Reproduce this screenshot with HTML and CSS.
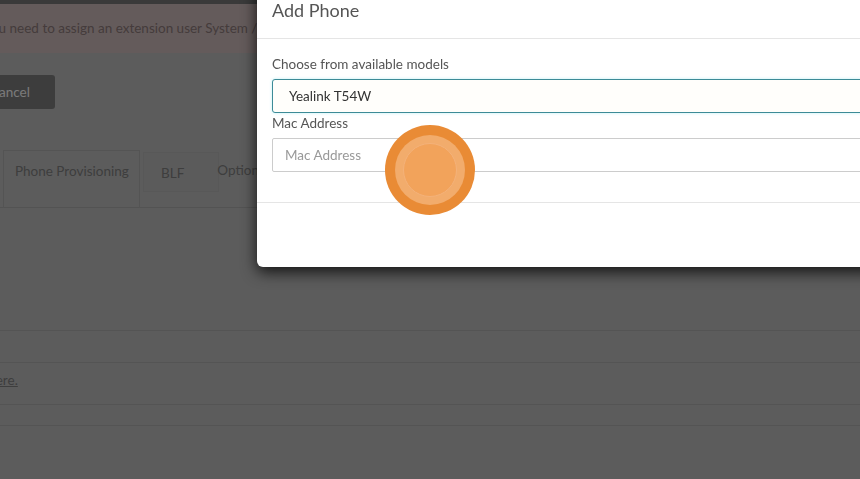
FILE: index.html
```html
<!DOCTYPE html>
<html lang="en">
<head>
<meta charset="utf-8">
<title>Add Phone</title>
<link rel="stylesheet" href="styles.css">
</head>
<body>
<div class="page">
  <div class="topbar"></div>
  <div class="alert">You need to assign an extension user System / Roles</div>
  <div class="actions">
    <button class="btn-cancel">Cancel</button>
  </div>
  <div class="tabs">
    <div class="tab active">Phone Provisioning</div>
    <div class="tab hover">BLF</div>
    <div class="tab">Options</div>
  </div>
  <div class="tab-body">
    <div class="row r1"></div>
    <div class="row r2"></div>
    <div class="row r3"><a href="#" class="link">Click here.</a></div>
    <div class="row r4"></div>
  </div>
</div>

<div class="backdrop"></div>

<div class="modal">
  <div class="modal-header">Add Phone</div>
  <div class="modal-body">
    <label class="lbl">Choose from available models</label>
    <div class="select">Yealink T54W</div>
    <label class="lbl">Mac Address</label>
    <input class="input" type="text" placeholder="Mac Address">
  </div>
  <div class="modal-footer"></div>
</div>

<div class="click-marker"><div class="ring"><div class="dot"></div></div></div>
</body>
</html>
```

FILE: styles.css
```css
html, body {
  margin: 0;
  padding: 0;
}
body {
  width: 860px;
  height: 479px;
  overflow: hidden;
  background: #b8b8b8;
  font-family: "Lato", "Liberation Sans", sans-serif;
  font-size: 13.5px;
  color: #333;
}
.page {
  display: flex;
  flex-direction: column;
}
.topbar {
  height: 4px;
  background: #747474;
}
.alert {
  height: 49px;
  box-sizing: border-box;
  padding: 14px 0 0 0;
  margin-left: -16px;
  background: #c8b6b6;
  color: #8a7878;
  line-height: 20px;
  white-space: nowrap;
}
.actions {
  padding-top: 22px;
  margin-left: -22px;
}
.btn-cancel {
  height: 34px;
  width: 77px;
  border: 0;
  border-radius: 3px;
  background: #7a7a7a;
  color: #f4f4f4;
  font-family: inherit;
  font-size: 13.5px;
  text-align: left;
  padding: 0 12px;
}
.tabs {
  display: flex;
  margin-top: 41px;
  border-bottom: 1px solid #a6a6a6;
  height: 57px;
  padding-left: 3px;
  color: #7c7c7c;
  white-space: nowrap;
}
.tab {
  box-sizing: border-box;
  padding: 0 16px;
  line-height: 40px;
}
.tab.active {
  border: 1px solid #a8a8a8;
  border-bottom: 0;
  width: 137px;
  padding-left: 11px;
  height: 58px;
}
.tab.hover {
  margin-left: 3px;
  margin-top: 2px;
  padding-left: 17px;
  padding-right: 34px;
  height: 40px;
  background: #b6b6b6;
  border: 1px solid #b0b0b0;
}
.tab.hover + .tab {
  margin-left: -18px;
}
.tab-body {
  display: flex;
  flex-direction: column;
}
.row {
  border-bottom: 1px solid #a8a8a8;
}
.r1 { height: 122px; }
.r2 { height: 31px; }
.r3 { height: 41px; margin-left: -44px; line-height: 34px; }
.r4 { height: 20px; }
.link {
  color: #7c7c7c;
  text-decoration: underline;
}
.backdrop {
  position: fixed;
  inset: 0;
  background: rgba(0, 0, 0, 0.5);
}
.modal {
  position: absolute;
  left: 257px;
  top: -17px;
  width: 900px;
  background: #fff;
  border-radius: 6px;
  box-shadow: 0 5px 15px rgba(0, 0, 0, 0.8);
}
.modal-header {
  padding: 15px;
  font-size: 18px;
  line-height: 25px;
  color: #555;
  border-bottom: 1px solid #e5e5e5;
}
.modal-body {
  padding: 15px 15px 0 15px;
  display: flex;
  flex-direction: column;
  align-items: flex-start;
}
.lbl {
  font-size: 13.5px;
  line-height: 20px;
  color: #555;
  margin-bottom: 5px;
}
.select {
  box-sizing: border-box;
  width: 100%;
  height: 34px;
  border: 1px solid #3d8b97;
  border-radius: 3px;
  background: #fffefb;
  padding-left: 16px;
  line-height: 32px;
  color: #333;
  box-shadow: 0 0 3px rgba(102, 220, 233, 0.45);
}
.input {
  box-sizing: border-box;
  width: 100%;
  height: 34px;
  border: 1px solid #ccc;
  border-radius: 2px;
  padding: 0 12px;
  font-family: inherit;
  font-size: 13.5px;
  margin: 0 0 30px 0;
  color: #333;
}
.input::placeholder {
  color: #999;
}
.modal-footer {
  height: 64px;
  border-top: 1px solid #e5e5e5;
}
.click-marker {
  position: absolute;
  left: 385px;
  top: 125px;
  width: 90px;
  height: 90px;
  border-radius: 50%;
  background: #e98b35;
  display: flex;
  align-items: center;
  justify-content: center;
}
.ring {
  width: 70px;
  height: 70px;
  border-radius: 50%;
  background: #f2ac6c;
  display: flex;
  align-items: center;
  justify-content: center;
}
.dot {
  width: 52px;
  height: 52px;
  border-radius: 50%;
  background: #f2a35b;
  border: 1px solid #f4b27a;
}
```
